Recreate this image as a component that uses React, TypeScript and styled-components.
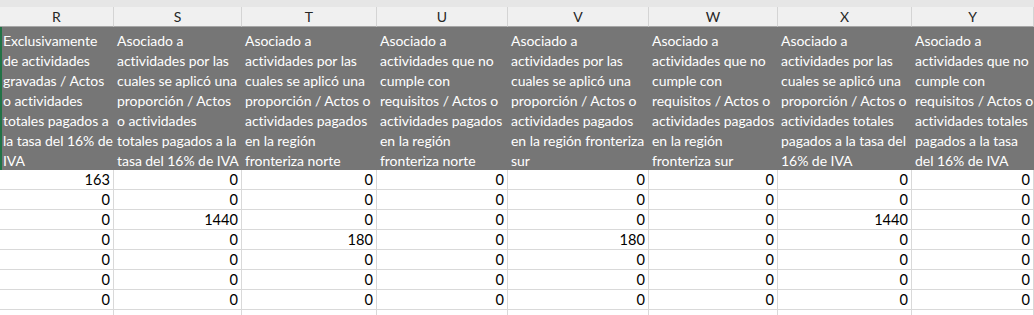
import React from "react";
import styled, { createGlobalStyle } from "styled-components";

const GlobalStyle = createGlobalStyle`
  html, body {
    margin: 0;
    padding: 0;
    background: #ffffff;
  }
  body {
    font-family: Lato, "Open Sans", sans-serif;
  }
`;

const Page = styled.div`
  width: 1034px;
  height: 315px;
  overflow: hidden;
  background: #ffffff;
`;

const TopStrip = styled.div`
  height: 7px;
  background: #e6e6e6;
`;

const Grid = styled.div`
  display: grid;
  grid-template-columns: 114px 128px 135px 131px 141px 129px 134px 1fr;
`;

const Letter = styled.div`
  height: 20px;
  box-sizing: border-box;
  background: #f0f0f0;
  border-right: 1px solid #d4d4d4;
  border-bottom: 1px solid #a6a6a6;
  display: flex;
  align-items: center;
  justify-content: center;
  font-size: 14px;
  color: #262626;
`;

const HeadCell = styled.div<{ $selected?: boolean }>`
  height: 143px;
  box-sizing: border-box;
  background: #767676;
  color: #ffffff;
  padding: 4px 0 0 3px;
  overflow: hidden;
  font-size: 14px;
  letter-spacing: -0.05px;
  line-height: 20px;
  white-space: nowrap;
  box-shadow: ${(p) => (p.$selected ? "inset 2px 0 0 #217346" : "none")};
`;

const Line = styled.div`
  height: 20px;
`;

const NumCell = styled.div`
  height: 20px;
  box-sizing: border-box;
  border-right: 1px solid #d9d9d9;
  border-bottom: 1px solid #d9d9d9;
  padding-right: 3px;
  display: flex;
  align-items: center;
  justify-content: flex-end;
  font-size: 14.6px;
  color: #000000;
`;

const letters = ["R", "S", "T", "U", "V", "W", "X", "Y"];

const headers: string[][] = [
  ["Exclusivamente", "de actividades", "gravadas / Actos", "o actividades", "totales pagados a", "la tasa del 16% de", "IVA"],
  ["Asociado a", "actividades por las", "cuales se aplicó una", "proporción / Actos", "o actividades", "totales pagados a la", "tasa del 16% de IVA"],
  ["Asociado a", "actividades por las", "cuales se aplicó una", "proporción / Actos o", "actividades pagados", "en la región", "fronteriza norte"],
  ["Asociado a", "actividades que no", "cumple con", "requisitos / Actos o", "actividades pagados", "en la región", "fronteriza norte"],
  ["Asociado a", "actividades por las", "cuales se aplicó una", "proporción / Actos o", "actividades pagados", "en la región fronteriza", "sur"],
  ["Asociado a", "actividades que no", "cumple con", "requisitos / Actos o", "actividades pagados", "en la región", "fronteriza sur"],
  ["Asociado a", "actividades por las", "cuales se aplicó una", "proporción / Actos o", "actividades totales", "pagados a la tasa del", "16% de IVA"],
  ["Asociado a", "actividades que no", "cumple con", "requisitos / Actos o", "actividades totales", "pagados a la tasa", "del 16% de IVA"],
];

const rows: (number | string)[][] = [
  [163, 0, 0, 0, 0, 0, 0, 0],
  [0, 0, 0, 0, 0, 0, 0, 0],
  [0, 1440, 0, 0, 0, 0, 1440, 0],
  [0, 0, 180, 0, 180, 0, 0, 0],
  [0, 0, 0, 0, 0, 0, 0, 0],
  [0, 0, 0, 0, 0, 0, 0, 0],
  [0, 0, 0, 0, 0, 0, 0, 0],
  ["", "", "", "", "", "", "", ""],
];

const App: React.FC = () => {
  return (
    <Page>
      <GlobalStyle />
      <TopStrip />
      <Grid>
        {letters.map((l) => (
          <Letter key={l}>{l}</Letter>
        ))}
        {headers.map((lines, i) => (
          <HeadCell key={i} $selected={i === 0}>
            {lines.map((t, j) => (
              <Line key={j}>{t}</Line>
            ))}
          </HeadCell>
        ))}
        {rows.map((row, r) =>
          row.map((v, c) => <NumCell key={r + "-" + c}>{v}</NumCell>)
        )}
      </Grid>
    </Page>
  );
};

export default App;
